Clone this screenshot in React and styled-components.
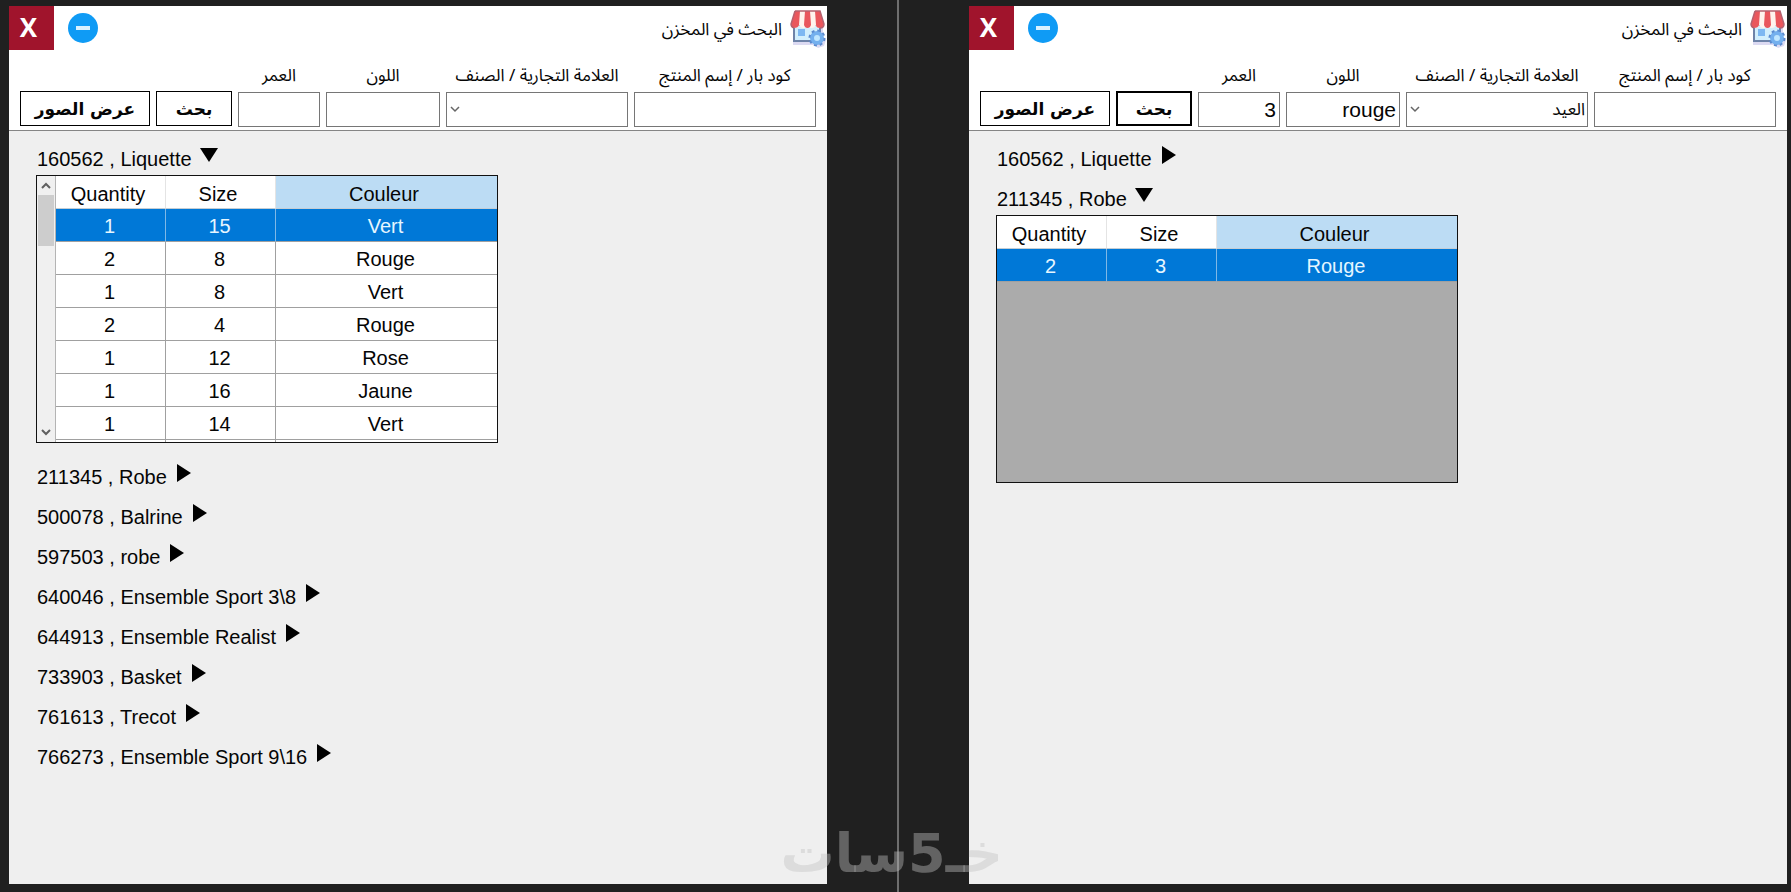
import { useId, useRef, useState } from 'react'
import styled, { createGlobalStyle } from 'styled-components'

const GlobalStyle = createGlobalStyle`
    * {
        box-sizing: border-box;
    }

    body {
        margin: 0;
        background: #202020;
        color: #050505;
        font-family: "Liberation Sans", Arial, sans-serif;
        font-size: 20px;
    }

    button, input, select {
        font: inherit;
        color: inherit;
    }
`

const arabic = '"Noto Sans Arabic", "Noto Sans", "DejaVu Sans", sans-serif'

const Page = styled.div`
    position: relative;
    display: grid;
    grid-template-columns: 1fr 70px 2px 70px 1fr;
    min-height: 100vh;
    padding: 0 4px 0 9px;
`

const Divider = styled.div`
    grid-column: 3;
    background: #6e6e6e;
`

const Window = styled.section`
    display: flex;
    flex-direction: column;
    grid-column: ${({ $column }) => $column};
    margin: 6px 0 8px;
    background: #efefef;
`

const TitleBar = styled.header`
    display: flex;
    align-items: center;
    height: 44px;
    padding-right: 1px;
    background: #fff;
`

const CloseButton = styled.button`
    align-self: stretch;
    width: 45px;
    padding: 0 6px 2px 0;
    border: 0;
    background: #a0142c;
    color: #fff;
    font: bold 26px/36px "Open Sans", sans-serif;
`

const MinimizeButton = styled.button`
    display: flex;
    align-items: center;
    justify-content: center;
    width: 30px;
    height: 30px;
    margin-left: 14px;
    padding: 0;
    border: 0;
    border-radius: 50%;
    background: #0f9bf5;

    &::before {
        content: "";
        width: 14px;
        height: 4px;
        background: #d8f1ff;
    }
`

const Title = styled.h1`
    margin: 0 7px 0 auto;
    padding-top: 4px;
    font: 400 17px/28px ${arabic};
`

const Filters = styled.form`
    display: grid;
    grid-template-columns: 130px 76px 82fr 114fr 182fr 182fr;
    align-items: end;
    gap: 6px;
    padding: 12px 11px 3px;
    border-bottom: 1px solid #858585;
    background: #fff;
`

const FilterButton = styled.button`
    height: 35px;
    margin-bottom: 1px;
    padding: 0;
    border: ${({ $focused }) => ($focused ? 2 : 1)}px solid #000;
    background: #fff;
    font: bold 17px/28px "DejaVu Sans", sans-serif;
`

const Field = styled.div`
    display: flex;
    flex-direction: column;
    gap: 2px;
    min-width: 0;
`

const Label = styled.label`
    font: 17px/28px ${arabic};
    text-align: center;
    white-space: nowrap;
`

const TextInput = styled.input`
    width: 100%;
    height: 35px;
    padding: 0 3px;
    border: 1px solid #767676;
    border-radius: 0;
    background: #fff;
    font-size: 21px;
    text-align: right;
`

const SelectBox = styled.div`
    position: relative;
    display: flex;
`

const Select = styled.select`
    width: 100%;
    height: 35px;
    padding: 0 2px 0 20px;
    border: 1px solid #767676;
    border-radius: 0;
    background: #fff;
    font: 17px/28px ${arabic};
    appearance: none;
`

const SelectArrow = styled.svg`
    position: absolute;
    top: 14px;
    left: 4px;
    pointer-events: none;
`

const Products = styled.ul`
    display: flex;
    flex-direction: column;
    align-items: flex-start;
    gap: 8px;
    margin: 0;
    padding: 12px 27px;
    list-style: none;
`

const ProductButton = styled.button`
    display: flex;
    align-items: center;
    gap: 8px;
    height: 32px;
    padding: 0 0 0 1px;
    border: 0;
    background: none;
    white-space: nowrap;
`

const Arrow = styled.svg`
    align-self: flex-start;
    margin-top: 3px;
`

const Stock = styled.div`
    display: flex;
    width: 462px;
    height: 268px;
    margin-bottom: 10px;
    border: 1px solid #111;
    background: #ababab;
`

const StockView = styled.div`
    flex: 1;
    overflow: hidden;
`

const StockTable = styled.table`
    width: 100%;
    border-collapse: separate;
    border-spacing: 0;
    table-layout: fixed;
    text-align: center;
`

const HeadCell = styled.th`
    width: ${({ $wide }) => ($wide ? 'auto' : '110px')};
    height: 33px;
    padding: 4px 5px 0 0;
    border-right: 1px solid #e4e4e4;
    border-bottom: 1px solid #c4cdd4;
    background: ${({ $wide }) => ($wide ? '#bcdcf4' : '#fff')};
    font-weight: 400;

    &:last-child {
        border-right: 0;
    }
`

const Row = styled.tr`
    background: ${({ $selected }) => ($selected ? '#0078d7' : '#fff')};
    color: ${({ $selected }) => ($selected ? '#e6f6ff' : '#050505')};
    --line: ${({ $selected }) => ($selected ? '#7fb8e6' : '#a0a0a0')};
`

const Cell = styled.td`
    height: 33px;
    padding: 2px 2px 0 0;
    border-right: 1px solid var(--line);
    border-bottom: 1px solid #a0a0a0;

    &:last-child {
        border-right: 0;
    }
`

const ScrollBar = styled.div`
    display: flex;
    flex-direction: column;
    width: 19px;
    border-right: 1px solid #b4b4b4;
    background: #f0f0f0;
`

const ScrollButton = styled.button`
    display: flex;
    align-items: center;
    justify-content: center;
    height: 19px;
    padding: 0;
    border: 0;
    background: none;
`

const ScrollTrack = styled.div`
    flex: 1;
    padding: 0 1px;
`

const ScrollThumb = styled.div`
    height: 51px;
    background: #cdcdcd;
`

const Watermark = styled.div`
    position: absolute;
    right: 788px;
    bottom: 6px;
    color: rgba(194, 194, 194, 0.42);
    font: bold 54px/64px "DejaVu Sans", sans-serif;
    white-space: nowrap;
    pointer-events: none;
`

const products = [
    { code: '160562', name: 'Liquette' },
    { code: '211345', name: 'Robe' },
    { code: '500078', name: 'Balrine' },
    { code: '597503', name: 'robe' },
    { code: '640046', name: 'Ensemble Sport 3\\8' },
    { code: '644913', name: 'Ensemble Realist' },
    { code: '733903', name: 'Basket' },
    { code: '761613', name: 'Trecot' },
    { code: '766273', name: 'Ensemble Sport 9\\16' },
]

const liquetteStock = [
    [1, 15, 'Vert'],
    [2, 8, 'Rouge'],
    [1, 8, 'Vert'],
    [2, 4, 'Rouge'],
    [1, 12, 'Rose'],
    [1, 16, 'Jaune'],
    [1, 14, 'Vert'],
    ['', '', ''],
]

const robeStock = [[2, 3, 'Rouge']]

function StoreIcon() {
    return (
        <svg width="37" height="39" viewBox="0 0 37 39" aria-hidden="true">
            <path d="M4 17h30v10l3 4-2 6-6 2-4-3H4z" fill="#dcdaf2" />
            <path d="M5 16h26v16H5z" fill="#d2effd" stroke="#6d83a8" strokeWidth="2" />
            <path d="M9 20h7v7H9z" fill="#7db8f2" />
            <path d="M6 2h25l4 13q0 4-4 4t-4-3q-1 3-4.500 3T18.500 16q-1 3-4 3T10 16q-1 3-5 3-3-1-3-4z" fill="#fff4ee" />
            <path d="M6 2h5l-1 14q-1 3-5 3-3-1-3-4zM16 2h5l1 14q-1 3-3.500 3T15 16zM26 2h5l4 13q0 4-4 4t-4-3z" fill="#e9575d" />
            <path d="M6 2h25l4 13q0 4-4 4M5 19q-3-1-3-4L6 2" fill="none" stroke="#b4616f" strokeWidth="1.500" />
            <circle cx="28" cy="29" r="5" fill="#bfe6ff" stroke="#74b0ee" strokeWidth="4" />
            <circle cx="28" cy="29" r="7.500" fill="none" stroke="#5b8bd0" strokeWidth="2" strokeDasharray="3 2.900" />
        </svg>
    )
}

function Chevron({ up }) {
    return (
        <svg width="10" height="7" viewBox="0 0 10 7" aria-hidden="true">
            <path d={up ? 'M1 6l4-4 4 4' : 'M1 1l4 4 4-4'} fill="none" stroke="#606060" strokeWidth="2" />
        </svg>
    )
}

function StockGrid({ rows, scrollable }) {
    const view = useRef(null)
    const [selected, setSelected] = useState(0)

    return (
        <Stock>
            {scrollable && (
                <ScrollBar>
                    <ScrollButton type="button" aria-label="Scroll up" onClick={() => view.current.scrollBy(0, -33)}>
                        <Chevron up />
                    </ScrollButton>
                    <ScrollTrack>
                        <ScrollThumb />
                    </ScrollTrack>
                    <ScrollButton type="button" aria-label="Scroll down" onClick={() => view.current.scrollBy(0, 33)}>
                        <Chevron />
                    </ScrollButton>
                </ScrollBar>
            )}
            <StockView ref={view}>
                <StockTable>
                    <thead>
                        <tr>
                            <HeadCell>Quantity</HeadCell>
                            <HeadCell>Size</HeadCell>
                            <HeadCell $wide>Couleur</HeadCell>
                        </tr>
                    </thead>
                    <tbody>
                        {rows.map((row, i) => (
                            <Row key={i} $selected={i === selected} onClick={() => setSelected(i)}>
                                {row.map((value, j) => (
                                    <Cell key={j}>{value}</Cell>
                                ))}
                            </Row>
                        ))}
                    </tbody>
                </StockTable>
            </StockView>
        </Stock>
    )
}

function Product({ product, stock, scrollable, defaultOpen }) {
    const [open, setOpen] = useState(defaultOpen)

    return (
        <li>
            <ProductButton type="button" aria-expanded={open} onClick={() => setOpen(!open)}>
                {product.code} , {product.name}
                <Arrow width="18" height="18" viewBox="0 0 18 18" aria-hidden="true">
                    <path d={open ? 'M0 2h18L9 16z' : 'M2 0v18l14-9z'} />
                </Arrow>
            </ProductButton>
            {open && stock && <StockGrid rows={stock} scrollable={scrollable} />}
        </li>
    )
}

function StockWindow({ column, age, color, brand, searched, children }) {
    const id = useId()

    return (
        <Window $column={column}>
            <TitleBar>
                <CloseButton type="button">X</CloseButton>
                <MinimizeButton type="button" aria-label="Minimize" />
                <Title dir="rtl">البحث في المخزن</Title>
                <StoreIcon />
            </TitleBar>
            <Filters onSubmit={(e) => e.preventDefault()}>
                <FilterButton type="button">عرض الصور</FilterButton>
                <FilterButton type="submit" $focused={searched}>بحث</FilterButton>
                <Field>
                    <Label htmlFor={`${id}-age`}>العمر</Label>
                    <TextInput id={`${id}-age`} defaultValue={age} />
                </Field>
                <Field>
                    <Label htmlFor={`${id}-color`}>اللون</Label>
                    <TextInput id={`${id}-color`} defaultValue={color} />
                </Field>
                <Field>
                    <Label htmlFor={`${id}-brand`} dir="rtl">العلامة التجارية / الصنف</Label>
                    <SelectBox>
                        <Select id={`${id}-brand`} dir="rtl" defaultValue={brand}>
                            <option value=""></option>
                            <option value="العيد">العيد</option>
                        </Select>
                        <SelectArrow width="10" height="7" viewBox="0 0 10 7" aria-hidden="true">
                            <path d="M1 1l4 4 4-4" fill="none" stroke="#666" strokeWidth="1.500" />
                        </SelectArrow>
                    </SelectBox>
                </Field>
                <Field>
                    <Label htmlFor={`${id}-product`} dir="rtl">كود بار / إسم المنتج</Label>
                    <TextInput id={`${id}-product`} />
                </Field>
            </Filters>
            <Products>{children}</Products>
        </Window>
    )
}

export default function App() {
    return (
        <Page>
            <GlobalStyle />
            <StockWindow column={1} age="" color="" brand="">
                {products.map((product, i) => (
                    <Product
                        key={product.code}
                        product={product}
                        stock={i === 0 ? liquetteStock : null}
                        scrollable
                        defaultOpen={i === 0}
                    />
                ))}
            </StockWindow>
            <Divider />
            <StockWindow column={5} age="3" color="rouge" brand="العيد" searched>
                <Product product={products[0]} defaultOpen={false} />
                <Product product={products[1]} stock={robeStock} defaultOpen />
            </StockWindow>
            <Watermark dir="rtl">خـ5سات</Watermark>
        </Page>
    )
}
